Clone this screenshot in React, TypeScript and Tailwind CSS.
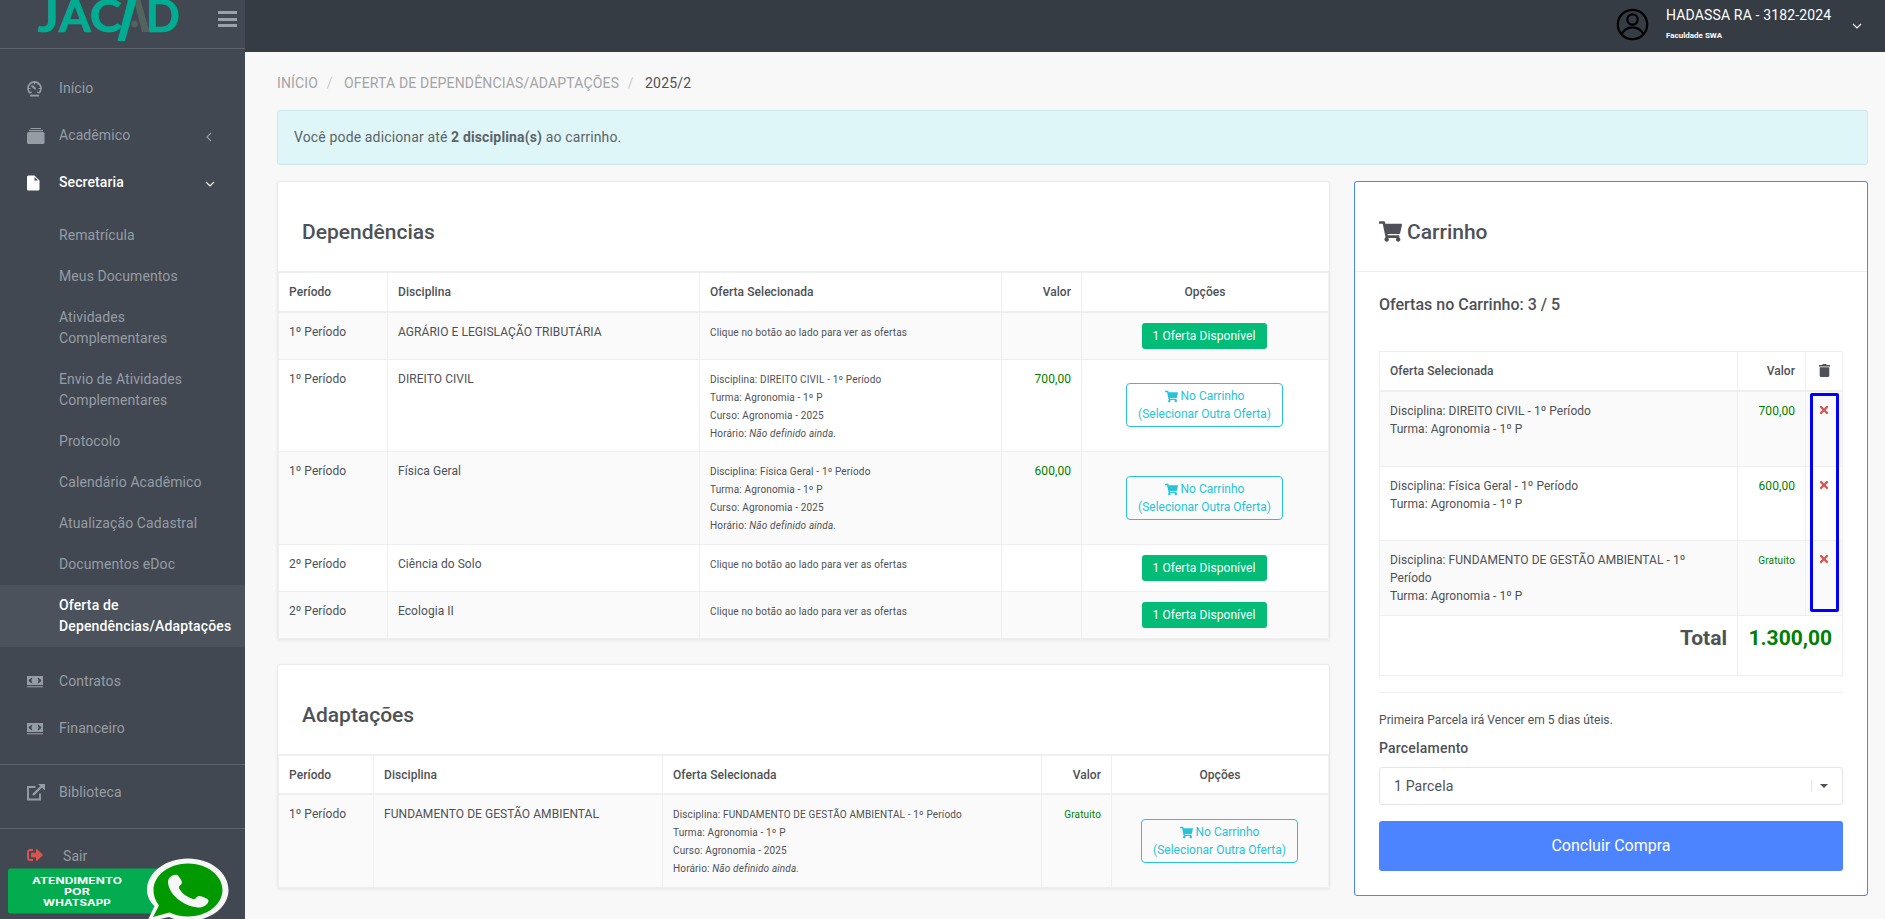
import type { ReactNode } from "react"
import { FaShoppingCart, FaSignOutAlt, FaTimes } from "react-icons/fa"

type Offer = {
  period: string
  subject: string
  offer?: string
  value?: string
  rowClass: string
}

const dependencies: Offer[] = [
  { period: "1º Período", subject: "AGRÁRIO E LEGISLAÇÃO TRIBUTÁRIA", rowClass: "h-[47px]" },
  {
    period: "1º Período",
    subject: "DIREITO CIVIL",
    offer: "DIREITO CIVIL",
    value: "700,00",
    rowClass: "h-[92px] [&_button]:mb-px",
  },
  { period: "1º Período", subject: "Física Geral", offer: "Física Geral", value: "600,00", rowClass: "h-[93px]" },
  { period: "2º Período", subject: "Ciência do Solo", rowClass: "h-[47px]" },
  { period: "2º Período", subject: "Ecologia II", rowClass: "h-[47px]" },
]

const adaptations: Offer[] = [
  {
    period: "1º Período",
    subject: "FUNDAMENTO DE GESTÃO AMBIENTAL",
    offer: "FUNDAMENTO DE GESTÃO AMBIENTAL",
    value: "Gratuito",
    rowClass: "h-[93px]",
  },
]

const cart = [
  { name: "DIREITO CIVIL", value: "700,00", rowClass: "h-[75px]" },
  { name: "Física Geral", value: "600,00", rowClass: "h-[74px]" },
  { name: "FUNDAMENTO DE GESTÃO AMBIENTAL", value: "Gratuito", rowClass: "h-[75px]" },
]

const submenu = [
  { label: "Rematrícula" },
  { label: "Meus Documentos" },
  { label: "Atividades Complementares", tall: true },
  { label: "Envio de Atividades Complementares", tall: true },
  { label: "Protocolo" },
  { label: "Calendário Acadêmico" },
  { label: "Atualização Cadastral" },
  { label: "Documentos eDoc" },
  { label: "Oferta de Dependências/Adaptações", tall: true, active: true },
]

function Logo() {
  return (
    <svg className="absolute left-0 top-0" width="190" height="44" viewBox="0 0 190 44">
      <g fontFamily="Lato" fontWeight="700" fontSize="46" fill="#00ac92" stroke="#00ac92" strokeWidth="0.700">
        <text x="38" y="31.700" textLength="21" lengthAdjust="spacingAndGlyphs">J</text>
        <text x="59" y="31.700" textLength="32" lengthAdjust="spacingAndGlyphs">A</text>
        <text x="90" y="31.700" textLength="32" lengthAdjust="spacingAndGlyphs">C</text>
        <text x="146" y="31.700" textLength="34" lengthAdjust="spacingAndGlyphs">D</text>
      </g>
      <path d="M134 0h6.500l9 32h-7.500z" fill="#53635f" />
      <circle cx="134.500" cy="24" r="3.200" fill="#53635f" />
      <path d="M128 0h8.500L125 41h-7.500z" fill="#00ac92" />
    </svg>
  )
}

function GaugeIcon() {
  return (
    <svg width="15" height="16" viewBox="0 0 15 16" fill="none" stroke="currentColor">
      <path d="M3.200 12.200A6.500 6.500 0 1 1 11.800 12.200" strokeWidth="1.600" />
      <path d="M7.500 1v2.500M1 7.500h2.500M11.500 7.500H14M10.500 3.500l1.200-1.200M3.300 12l1.500-1.300M11.700 12l-1.500-1.300" strokeWidth="1.200" />
      <path d="M4.500 4.500l3.500 3" strokeWidth="1.700" />
      <circle cx="8" cy="7.500" r="1" fill="currentColor" stroke="none" />
      <path d="M3 14.600h9" strokeWidth="1.800" />
    </svg>
  )
}

function AlbumsIcon() {
  return (
    <svg width="18" height="16" viewBox="0 0 18 16" fill="currentColor">
      <path d="M3.500 0h10.500v1H3.500zM2 2h14v1.200H2z" />
      <rect x="0" y="4" width="17.500" height="12" rx="1.600" />
    </svg>
  )
}

function DocumentIcon() {
  return (
    <svg width="13" height="16" viewBox="0 0 13 16" fill="currentColor">
      <path d="M2 .500h5.500L12.500 5.500V14a1.500 1.500 0 0 1-1.500 1.500H1.500A1.500 1.500 0 0 1 0 14V2A1.500 1.500 0 0 1 1.500.500zM7.500 2v3.500H11z" fillRule="evenodd" />
    </svg>
  )
}

function CashIcon() {
  return (
    <svg width="16" height="12" viewBox="0 0 16 12" fill="currentColor">
      <path d="M0 0h16v9H0z" />
      <path d="M0 10.200h16v1.100H0z" />
      <path d="M5.500 1.500C3.800 2 2.500 3 1.500 4.500c1 1.500 2.300 2.500 4 3C4.300 5.800 4.300 3.200 5.500 1.500zM10.500 1.500c1.700.5 3 1.500 4 3-1 1.500-2.300 2.500-4 3 1.200-1.700 1.200-4.300 0-6z" fill="#424852" />
    </svg>
  )
}

function OpenIcon() {
  return (
    <svg width="18" height="17" viewBox="0 0 18 17" fill="none" stroke="currentColor">
      <path d="M8.500 3H1v12.500h12V9.500" strokeWidth="1.900" />
      <path d="M6 11l8.500-8.500" strokeWidth="2.400" />
      <path d="M11 0h7v6.500z" fill="currentColor" stroke="none" />
    </svg>
  )
}

function TrashIcon() {
  return (
    <svg width="11" height="13" viewBox="0 0 11 13" fill="currentColor" className="mx-auto mb-0.5">
      <path d="M3.500 0h4v1H11v1.500H0V1h3.500zM.700 3.200h9.600V11.500A1.400 1.400 0 0 1 9 13H2A1.400 1.400 0 0 1 .700 11.500z" />
    </svg>
  )
}

function MenuItem({ icon, label, active, children }: { icon: ReactNode; label: string; active?: boolean; children?: ReactNode }) {
  return (
    <a className={`flex h-[47px] items-center pl-[27px] pr-[30px] ${active ? "font-medium text-white" : "text-[#959da4]"}`}>
      <span className="flex w-8 items-center">{icon}</span>
      <span className="flex-1">{label}</span>
      {children}
    </a>
  )
}

function Chevron({ left }: { left?: boolean }) {
  return left ? (
    <svg width="10" height="10" viewBox="0 0 10 10" className="mt-0.5" fill="none" stroke="currentColor" strokeWidth="1.100">
      <path d="M6 1L2 5l4 4" />
    </svg>
  ) : (
    <svg width="10" height="8" viewBox="0 0 10 8" className="mt-[3px]" fill="none" stroke="currentColor" strokeWidth="1.200">
      <path d="M1 2l4 4 4-4" />
    </svg>
  )
}

function WhatsappBadge() {
  return (
    <svg className="absolute bottom-0 left-0" width="235" height="63" viewBox="0 0 235 63">
      <rect x="8" y="12.500" width="155" height="45" rx="2.500" fill="#03ac4e" />
      <g fontFamily="Inter" fontWeight="700" fontSize="8.600" fill="#fff">
        <text x="32" y="28.300" textLength="90" lengthAdjust="spacingAndGlyphs">ATENDIMENTO</text>
        <text x="64" y="39.300" textLength="26" lengthAdjust="spacingAndGlyphs">POR</text>
        <text x="43" y="50.300" textLength="68" lengthAdjust="spacingAndGlyphs">WHATSAPP</text>
      </g>
      <path
        d="M188 2.500c22.500 0 40.500 14 40.500 31.500S210 65 188 65c-6.500 0-13-1.300-19-4l-22 5 7.500-16c-5-4.500-7.500-10-7.500-16 0-17.500 18.500-31.500 41-31.500z"
        fill="#f7f7f7"
      />
      <path
        d="M188 7.500c19 0 34.500 12 34.500 26.500S207 60.500 188 60.500c-7 0-13-1.300-18.500-4L153 61l6-11.500c-3.500-4.500-5.500-9.500-5.500-15.500C153.500 19.500 169 7.500 188 7.500z"
        fill="#009a00"
      />
      <path
        d="M172.500 19.500c2-1 4.500-1.500 6 .5 1.500 2.500 4.500 5.500 3 8-1.500 2-3.500 2.500-2 5 3 5 7.500 8 13.500 10 3 1 3.500-3.500 6.500-3 3.500.5 9 3 9 4.500 0 4-5.500 7.500-11 7-14-1.500-29-13-29.500-25.500 0-3 1.500-5 4.500-6.500z"
        fill="#f7f7f7"
      />
    </svg>
  )
}

function Sidebar() {
  return (
    <aside className="relative h-[919px] w-[245px] shrink-0 overflow-hidden bg-[#424852] text-[14px] leading-[21px] tracking-[0.090px]">
      <div className="relative flex h-[49px] justify-end border-b border-[#5c636d] pr-2">
        <Logo />
        <div className="mt-[11px] flex w-[19px] flex-col gap-[3.500px]">
          <span className="h-[3px] bg-[#9ba1a8]" />
          <span className="h-[3px] bg-[#9ba1a8]" />
          <span className="h-[3px] bg-[#9ba1a8]" />
        </div>
      </div>
      <nav className="pt-4">
        <MenuItem icon={<GaugeIcon />} label="Início" />
        <MenuItem icon={<AlbumsIcon />} label="Acadêmico">
          <Chevron left />
        </MenuItem>
        <MenuItem icon={<DocumentIcon />} label="Secretaria" active>
          <Chevron />
        </MenuItem>
        <ul className="pb-[11px] pt-[9px]">
          {submenu.map((item) => (
            <li
              key={item.label}
              className={`flex items-center pl-[59px] pr-2 ${item.tall ? "h-[62px]" : "h-[41px]"} ${
                item.active ? "bg-[#4b525c] font-medium tracking-[0.150px] text-white" : "text-[#959da4]"
              }`}
            >
              <span className="w-[150px]">{item.label}</span>
            </li>
          ))}
        </ul>
        <MenuItem icon={<CashIcon />} label="Contratos" />
        <MenuItem icon={<CashIcon />} label="Financeiro" />
        <div className="mt-3 border-y border-[#5c636d] pb-[12px] pt-1">
          <MenuItem icon={<OpenIcon />} label="Biblioteca" />
        </div>
        <div className="mt-1 flex h-[47px] items-center pl-[27px] text-[#959da4]">
          <FaSignOutAlt className="mb-1 mr-5 text-[#d9534f]" size={16} />
          Sair
        </div>
      </nav>
      <WhatsappBadge />
    </aside>
  )
}

function Topbar() {
  return (
    <header className="flex h-[52px] items-center bg-[#363c43] pb-[4px] pl-[1371px] text-white">
      <svg width="33" height="33" viewBox="0 0 33 33" fill="none" stroke="#000" strokeWidth="2.200" className="shrink-0">
        <circle cx="16.500" cy="16.500" r="14.700" />
        <circle cx="16.500" cy="11.500" r="5.200" />
        <path d="M5.500 26c3-5 6.500-6.700 11-6.700s8 1.700 11 6.700" />
      </svg>
      <div className="ml-[17px] w-[186px] shrink-0">
        <div className="text-[14px] leading-[21px] tracking-[0.150px]">HADASSA RA - 3182-2024</div>
        <div className="pt-[3px] text-[8px] font-bold leading-[14px]">Faculdade SWA</div>
      </div>
      <Chevron />
    </header>
  )
}

function OfferButton({ inCart }: { inCart: boolean }) {
  if (!inCart) {
    return (
      <button className="h-[26px] w-[125px] rounded-[3px] bg-[#02bc77] text-[12px] leading-[18px] tracking-[0.080px] text-white">
        1 Oferta Disponível
      </button>
    )
  }
  return (
    <button className="h-11 w-[157px] rounded-[4px] border border-[#28c3d7] pl-px text-[12px] leading-[18px] tracking-normal text-[#28c3d7]">
      <span className="flex items-center justify-center gap-[3px]">
        <FaShoppingCart size={13} />
        No Carrinho
      </span>
      (Selecionar Outra Oferta)
    </button>
  )
}

function Value({ value }: { value?: string }) {
  return value === "Gratuito" ? (
    <span className="text-[10px] tracking-[0.150px] text-[#008000]">{value}</span>
  ) : (
    <span className="text-[#008000]">{value}</span>
  )
}

type OfferCardProps = { title: string; rows: Offer[]; widths: string[]; headClass: string }

function OfferCard({ title, rows, widths, headClass }: OfferCardProps) {
  return (
    <section className="overflow-hidden rounded-[3px] border border-[#ebebec] bg-white shadow-[0_1px_3px_rgba(24,28,33,0.06)]">
      <h2 className="flex h-[89px] items-center px-6 pt-3 text-[21px] font-medium">{title}</h2>
      <table className="w-full table-fixed border-separate border-spacing-0 border-l border-t-2 border-[#efeff0] text-[12px] leading-[18px] tracking-[0.060px]">
        <colgroup>
          {widths.map((w) => (
            <col key={w} className={w} />
          ))}
        </colgroup>
        <thead>
          <tr
            className={`${headClass} text-left [&>th]:border-b-2 [&>th]:border-r [&>th]:border-[#efeff0] [&>th]:px-2.5 [&>th]:font-medium`}
          >
            <th>Período</th>
            <th>Disciplina</th>
            <th>Oferta Selecionada</th>
            <th className="text-right">Valor</th>
            <th className="text-center">Opções</th>
          </tr>
        </thead>
        <tbody>
          {rows.map((row) => (
            <tr
              key={row.subject}
              className={`${row.rowClass} align-top odd:bg-[#fafafa] [&>td]:border-b [&>td]:border-r [&>td]:border-[#efeff0] [&>td]:px-2.5 [&>td]:pt-2.5`}
            >
              <td>{row.period}</td>
              <td>{row.subject}</td>
              <td className="!pt-[11px] text-[10px] tracking-[0.150px]">
                {row.offer ? (
                  <>
                    Disciplina: {row.offer} - 1º Período
                    <br />
                    Turma: Agronomia - 1º P
                    <br />
                    Curso: Agronomia - 2025
                    <br />
                    Horário: <em>Não definido ainda.</em>
                  </>
                ) : (
                  "Clique no botão ao lado para ver as ofertas"
                )}
              </td>
              <td className="text-right">
                <Value value={row.value} />
              </td>
              <td className="!pt-0 text-center align-middle">
                <div className="mr-[2px] flex justify-center">
                  <OfferButton inCart={Boolean(row.offer)} />
                </div>
              </td>
            </tr>
          ))}
        </tbody>
      </table>
    </section>
  )
}

function CartCard() {
  return (
    <section className="h-[715px] w-[514px] rounded-[3px] border border-[#4c84ff] bg-white">
      <h2 className="flex h-[90px] items-center gap-[5px] border-b border-[#efeff0] px-6 pt-3 text-[21px] font-medium">
        <FaShoppingCart size={23} className="mb-0.5" />
        Carrinho
      </h2>
      <div className="px-6 pt-[21px]">
        <h3 className="text-[16px] font-medium leading-6">Ofertas no Carrinho: 3 / 5</h3>
        <div className="relative mt-[34px]">
          <table className="w-full table-fixed border-separate border-spacing-0 border-l border-t border-[#efeff0] text-[12px] leading-[18px] tracking-[0.060px]">
            <colgroup>
              <col className="w-[358px]" />
              <col className="w-[68px]" />
              <col />
            </colgroup>
            <thead>
              <tr className="h-[40px] text-left [&>th]:border-b-2 [&>th]:border-r [&>th]:border-[#efeff0] [&>th]:px-2.5 [&>th]:font-medium">
                <th>Oferta Selecionada</th>
                <th className="text-right">Valor</th>
                <th>
                  <TrashIcon />
                </th>
              </tr>
            </thead>
            <tbody>
              {cart.map((item) => (
                <tr
                  key={item.name}
                  className={`${item.rowClass} align-top odd:bg-[#fafafa] [&>td]:border-b [&>td]:border-r [&>td]:border-[#efeff0] [&>td]:px-2.5 [&>td]:pt-2.5`}
                >
                  <td>
                    Disciplina: {item.name} - 1º Período
                    <br />
                    Turma: Agronomia - 1º P
                  </td>
                  <td className="text-right">
                    <Value value={item.value} />
                  </td>
                  <td>
                    <FaTimes size={12} className="mx-auto mt-[2px] text-[#d9534f]" />
                  </td>
                </tr>
              ))}
              <tr className="h-[60px] text-right align-top text-[21px] font-bold leading-6 tracking-normal [&>td]:border-b [&>td]:border-r [&>td]:border-[#efeff0] [&>td]:px-2.5 [&>td]:pt-2.5">
                <td>Total</td>
                <td colSpan={2} className="text-[#008000]">
                  1.300,00
                </td>
              </tr>
            </tbody>
          </table>
          {/* Highlight around the remove buttons */}
          <div className="absolute right-1 top-[42px] h-[219px] w-[29px] rounded-[2px] border-3 border-[#0000ff]" />
        </div>
        <hr className="mt-4 border-[#efeff0]" />
        <p className="mt-[18px] text-[12px] leading-[18px] tracking-[0.060px]">Primeira Parcela irá Vencer em 5 dias úteis.</p>
        <label className="mt-[9px] block text-[14px] font-medium leading-[21px] tracking-[0.200px]">Parcelamento</label>
        <div className="mt-[8px] flex h-[38px] items-center rounded-[3px] border border-[#e6e6e8] px-3.5 text-[14px] tracking-[0.150px]">
          <span className="flex-1">1 Parcela</span>
          <span className="h-3 w-px bg-[#e3e4e5]" />
          <svg width="8" height="4" viewBox="0 0 8 4" className="ml-2">
            <path d="M0 0h8L4 4z" fill="#4e5155" />
          </svg>
        </div>
        <button className="mt-4 h-[50px] w-full rounded-[3px] bg-[#4c84ff] text-[16px] text-white">Concluir Compra</button>
      </div>
    </section>
  )
}

export default function App() {
  return (
    <div className="flex h-[919px] w-[1885px] overflow-hidden bg-[#f8f8f8] font-['Roboto',sans-serif] text-[#4e5155]">
      <Sidebar />
      <div className="flex-1">
        <Topbar />
        <main className="pl-8 pr-[17px]">
          <nav className="flex h-[58px] items-center pt-[5px] text-[14px] leading-[21px] tracking-[0.160px] text-[#a3a4a6]">
            <span>INÍCIO</span>
            <span className="px-[8.500px] text-[#c9cacc]">/</span>
            <span className="ml-[3px]">OFERTA DE DEPENDÊNCIAS/ADAPTAÇÕES</span>
            <span className="px-[8.500px] text-[#c9cacc]">/</span>
            <span className="ml-[3px] text-[#4e5155]">2025/2</span>
          </nav>
          <div className="flex h-[55px] items-center rounded-[3px] border border-[#cde9ec] bg-[#dff6f8] px-4 text-[14px] tracking-[0.140px] text-[#5c6468]">
            <p>
              Você pode adicionar até <b>2 disciplina(s)</b> ao carrinho.
            </p>
          </div>
          <div className="mt-4 flex gap-6">
            <div className="flex w-[1053px] flex-col gap-6">
              <OfferCard
                title="Dependências"
                rows={dependencies}
                widths={["w-[109px]", "w-[312px]", "w-[302px]", "w-[80px]", "w-[247px]"]}
                headClass="h-[40px]"
              />
              <OfferCard
                title="Adaptações"
                rows={adaptations}
                widths={["w-[95px]", "w-[289px]", "w-[379px]", "w-[70px]", "w-[217px]"]}
                headClass="h-[39px]"
              />
            </div>
            <CartCard />
          </div>
        </main>
      </div>
    </div>
  )
}
